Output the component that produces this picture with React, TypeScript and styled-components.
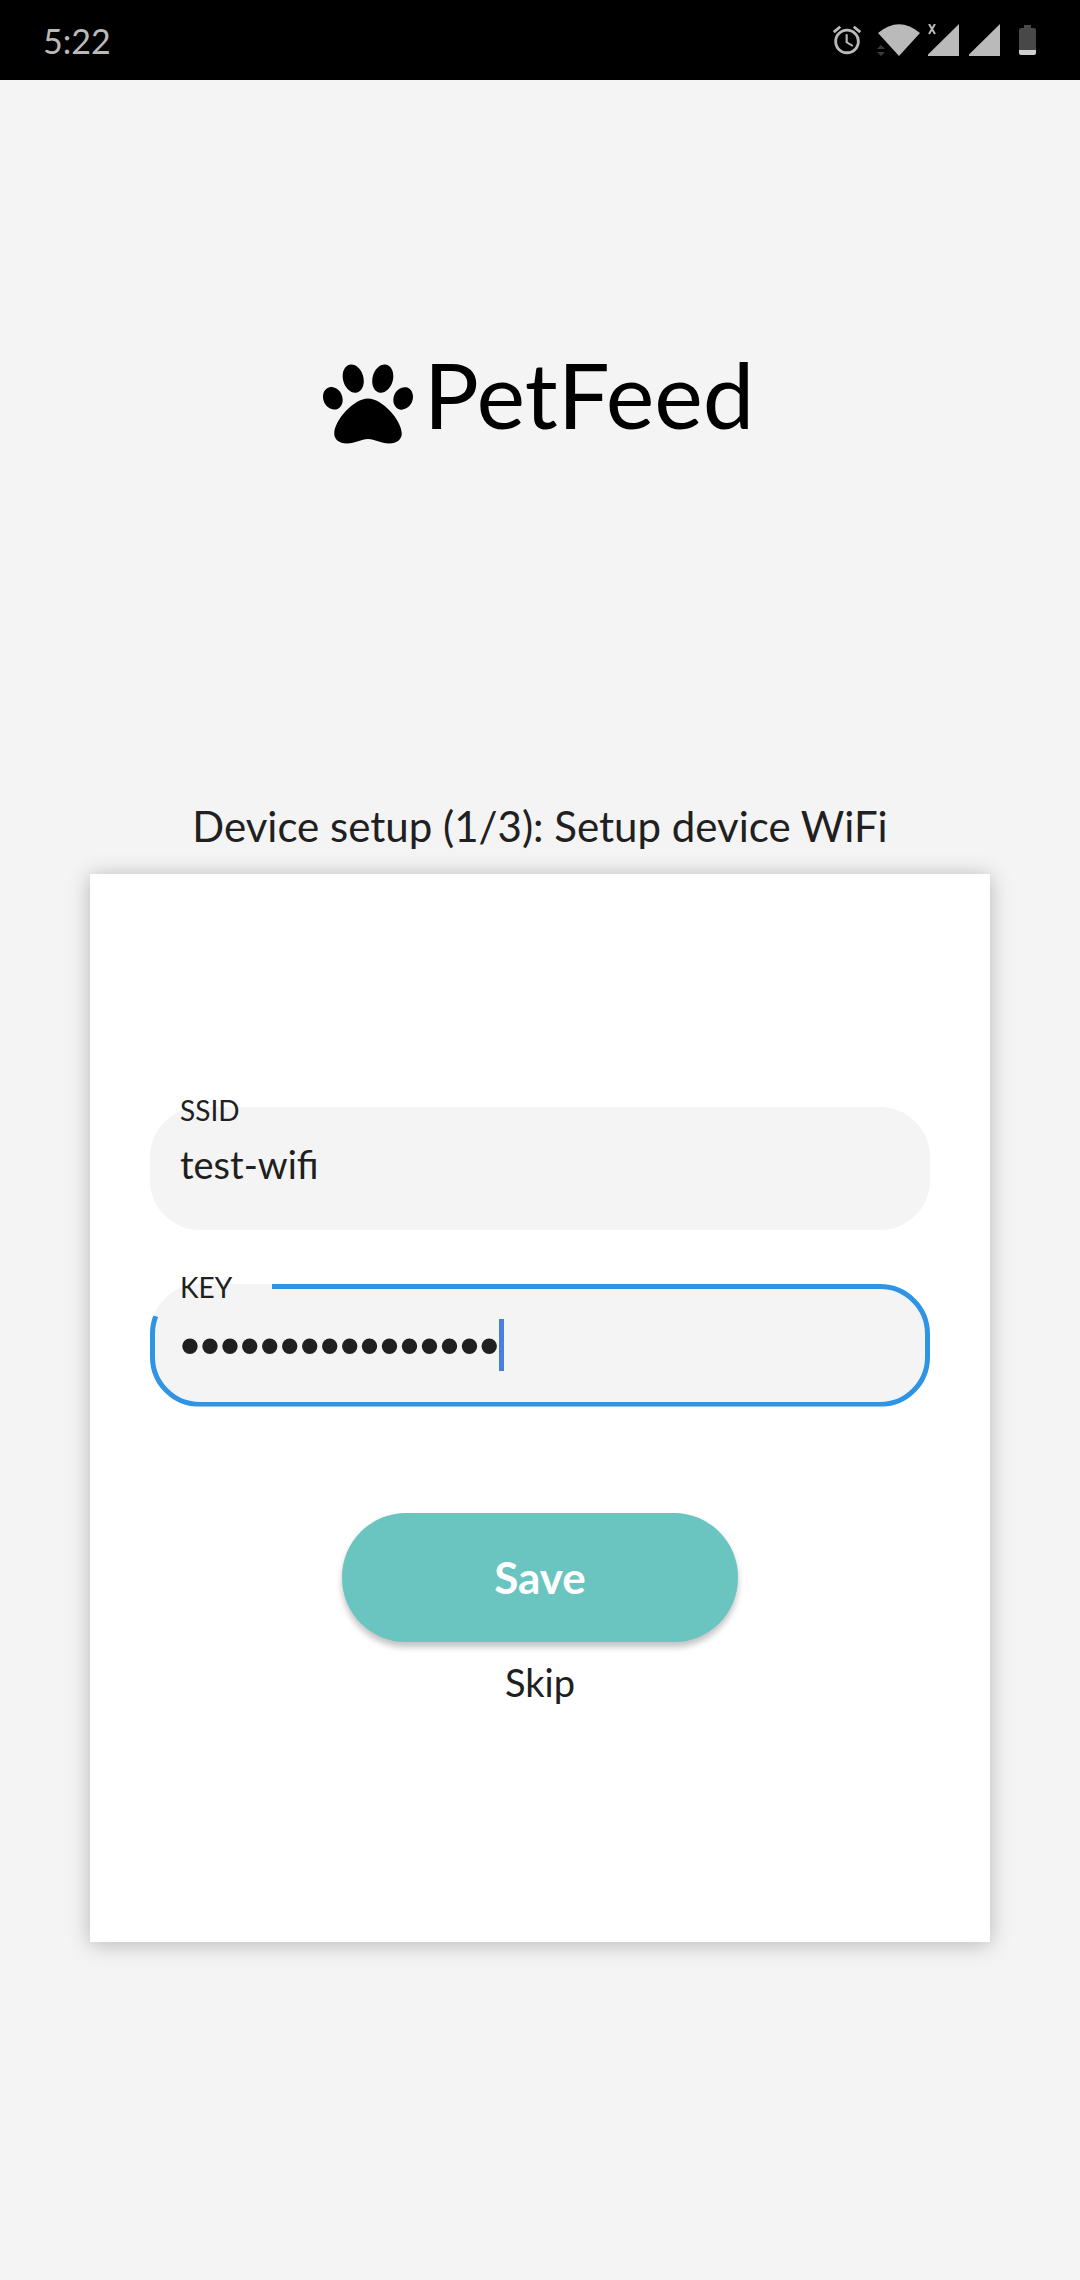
import React, { useState } from "react";
import styled, { createGlobalStyle, css } from "styled-components";
import { FaPaw } from "react-icons/fa";
import { MdAlarm } from "react-icons/md";

const GlobalStyle = createGlobalStyle`
  *, *::before, *::after { box-sizing: border-box; }
  body {
    margin: 0;
    background: #f4f4f4;
    color: #202020;
    font-family: Lato, "Noto Sans", sans-serif;
  }
  button, input { font-family: inherit; color: inherit; }
`;

const Page = styled.div`
  display: flex;
  flex-direction: column;
  min-height: 100vh;
`;

const StatusBar = styled.header`
  display: flex;
  align-items: center;
  justify-content: space-between;
  height: 80px;
  padding: 0 44px 0 43px;
  background: #000;
  color: #bababa;
`;

const Clock = styled.time`
  padding-top: 2px;
  font-size: 34px;
  line-height: 40px;
`;

const StatusIcons = styled.div`
  display: flex;
  align-items: center;
  gap: 13px;
`;

const Main = styled.main`
  display: flex;
  flex-direction: column;
  padding: 264px 90px;
`;

const Brand = styled.h1`
  display: flex;
  align-items: center;
  justify-content: center;
  gap: 11px;
  margin: 0 0 336px;
  padding-right: 3px;
  color: #000;
  font-size: 92px;
  font-weight: 400;
  line-height: 100px;
`;

const BrandName = styled.span`
  padding-bottom: 20px;
`;

const Heading = styled.h2`
  margin: 0 0 22px;
  font-size: 42px;
  font-weight: 400;
  line-height: 52px;
  text-align: center;
`;

const Card = styled.form`
  display: flex;
  flex-direction: column;
  justify-content: center;
  min-height: 1068px;
  padding: 60px;
  background: #fff;
  box-shadow: 0 2px 20px rgba(0, 0, 0, 0.26);
`;

const Fields = styled.div`
  display: flex;
  flex-direction: column;
  gap: 54px;
`;

const focusOutline = css`
  &::after {
    content: "";
    position: absolute;
    inset: 0;
    border: 5px solid #2f94e4;
    border-radius: 50px;
    clip-path: polygon(122px 0, 100% 0, 100% 100%, 0 100%, 0 31px, 16px 36px, 122px 36px);
    pointer-events: none;
  }
`;

const Field = styled.div<{ $active?: boolean }>`
  position: relative;
  display: flex;
  align-items: center;
  height: 123px;
  padding: 0 30px;
  background: #f4f4f4;
  border-radius: 50px;
  ${(p) => p.$active && focusOutline}
`;

const FieldLabel = styled.label`
  position: absolute;
  top: -14px;
  left: 30px;
  font-size: 28px;
  line-height: 34px;
`;

const TextInput = styled.input`
  flex: 1;
  min-width: 0;
  padding: 0 0 8px;
  border: 0;
  outline: 0;
  background: transparent;
  font-size: 38px;
  line-height: 48px;
`;

const SecretInput = styled.input`
  field-sizing: content;
  max-width: 100%;
  padding: 0;
  border: 0;
  outline: 0;
  background: transparent;
  caret-color: transparent;
  && { font-family: "Liberation Sans", Arial, sans-serif; }
  font-size: 57px;
  line-height: 64px;
`;

const Caret = styled.span`
  width: 5px;
  height: 52px;
  background: #4a80dc;
`;

const Actions = styled.div`
  display: flex;
  flex-direction: column;
  align-items: center;
  gap: 14px;
  margin-top: 106px;
`;

const SaveButton = styled.button`
  width: 396px;
  height: 129px;
  padding: 0;
  border: 0;
  border-radius: 64px;
  background: #6ac5c1;
  box-shadow: 0 5px 6px rgba(0, 0, 0, 0.24);
  && { color: #fff; }
  font-size: 44px;
  font-weight: 700;
`;

const SkipButton = styled.button`
  padding: 0 0 2px;
  border: 0;
  background: transparent;
  font-size: 38px;
  line-height: 52px;
`;

const Wifi = () => (
  <svg width="44" height="32" viewBox="0 0 44 32" aria-hidden="true">
    <path d="M1 9Q22-8.500 43 9L22 32Z" fill="#bababa" />
    <path d="M0 25l4-4 4 4zM0 28h8l-4 4z" fill="#3c3c3c" />
  </svg>
);

const Signal = ({ off }: { off?: boolean }) => (
  <svg width="31" height="32" viewBox="0 0 31 32" aria-hidden="true">
    <path d="M31 0V32H0V30.500Z" fill="#bababa" />
    {off && <path d="M1 0L7 10M7 0L1 10" stroke="#bababa" strokeWidth="2" />}
  </svg>
);

const Battery = () => (
  <svg width="17" height="30" viewBox="0 0 17 30" aria-hidden="true">
    <path d="M5 0H12V3H15Q17 3 17 5V25H0V5Q0 3 2 3H5Z" fill="#484848" />
    <path d="M0 25H17V28Q17 30 15 30H2Q0 30 0 28Z" fill="#cfcfcf" />
  </svg>
);

const Cluster = styled.div`
  display: flex;
  align-items: center;
  gap: 7px;
`;

const CellCluster = styled.div`
  display: flex;
  align-items: center;
  gap: 10px;
  margin-right: 6px;
`;

export default function App() {
  const [ssid, setSsid] = useState("test-wifi");
  const [key, setKey] = useState("petfeed-wifi-key");

  return (
    <Page>
      <GlobalStyle />
      <StatusBar>
        <Clock>5:22</Clock>
        <StatusIcons>
          <MdAlarm size={34} />
          <Cluster>
            <Wifi />
            <CellCluster>
              <Signal off />
              <Signal />
            </CellCluster>
          </Cluster>
          <Battery />
        </StatusIcons>
      </StatusBar>
      <Main>
        <Brand>
          <FaPaw size={90} aria-hidden="true" />
          <BrandName>PetFeed</BrandName>
        </Brand>
        <Heading>Device setup (1/3): Setup device WiFi</Heading>
        <Card onSubmit={(e) => e.preventDefault()}>
          <Fields>
            <Field>
              <FieldLabel htmlFor="ssid">SSID</FieldLabel>
              <TextInput id="ssid" value={ssid} onChange={(e) => setSsid(e.target.value)} />
            </Field>
            <Field $active>
              <FieldLabel htmlFor="key">KEY</FieldLabel>
              <SecretInput
                id="key"
                type="password"
                value={key}
                onChange={(e) => setKey(e.target.value)}
              />
              <Caret />
            </Field>
          </Fields>
          <Actions>
            <SaveButton type="submit">Save</SaveButton>
            <SkipButton type="button">Skip</SkipButton>
          </Actions>
        </Card>
      </Main>
    </Page>
  );
}
